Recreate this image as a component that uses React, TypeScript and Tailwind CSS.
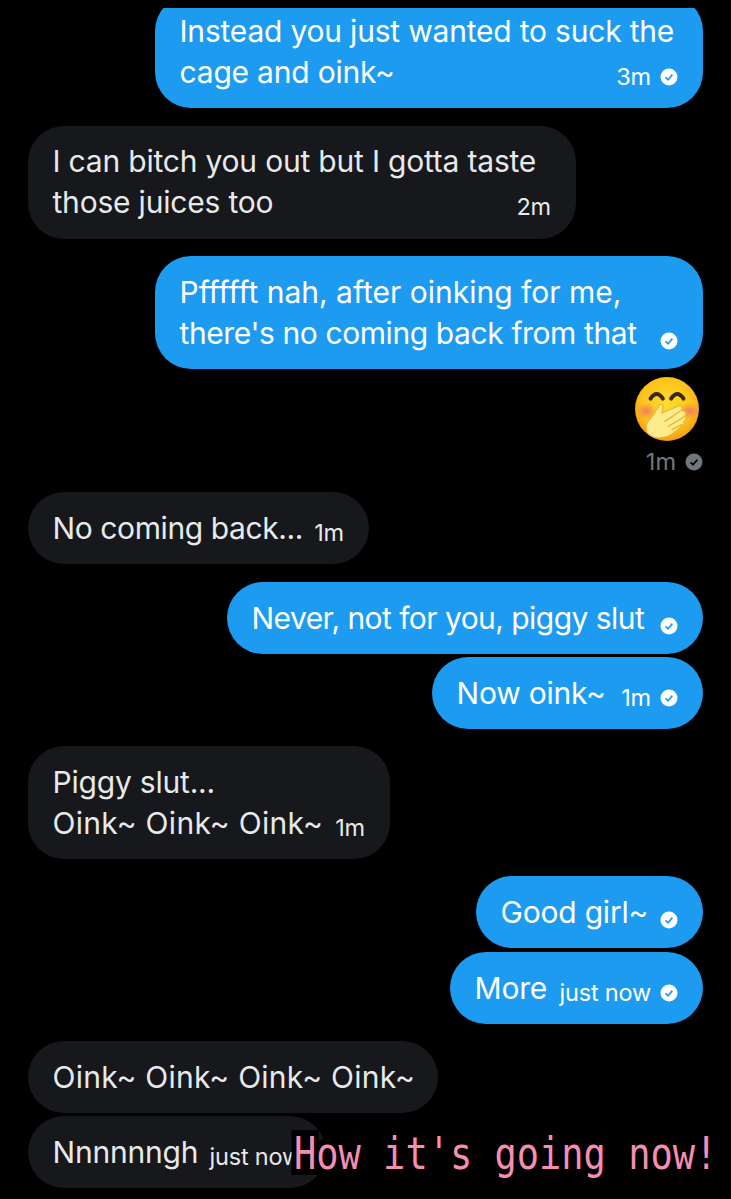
import type { ReactNode } from "react";

type MetaProps = { time?: string; read?: boolean };

function ReadCheck({ gray }: { gray?: boolean }) {
  return (
    <svg viewBox="0 0 18 18" className="h-[18px] w-[18px] shrink-0">
      <circle cx="9" cy="9" r="8.5" fill={gray ? "#71767b" : "#ffffff"} />
      <path
        d="M5.6 9.4 L8 11.7 L12.4 6.6"
        fill="none"
        stroke={gray ? "#000000" : "#1d9bf0"}
        strokeWidth="1.7"
      />
    </svg>
  );
}

function Meta({ time, read }: MetaProps) {
  return (
    <span
      className={`flex shrink-0 items-center gap-[9px] text-[23.5px] leading-[28px] ${
        time ? "pt-[9px]" : "pt-[15px]"
      }`}
    >
      {time ? <span>{time}</span> : null}
      {read ? <ReadCheck /> : null}
    </span>
  );
}

function Bubble({
  lines,
  mine,
  width,
  time,
}: {
  lines: ReactNode[];
  mine?: boolean;
  width: string;
  time?: string;
}) {
  const head = lines.slice(0, -1);
  const last = lines[lines.length - 1];
  return (
    <div
      className={`${width} rounded-[36px] py-[15.5px] pr-[25px] pl-[24.5px] text-[30px] leading-[41px] tracking-[-0.2px] whitespace-nowrap ${
        mine
          ? "self-end bg-[#1d9bf0] text-white"
          : "self-start bg-[#16181c] text-[#e7e9ea]"
      }`}
    >
      {head.map((l, i) => (
        <div key={i}>{l}</div>
      ))}
      <div className="flex items-center justify-between">
        <span>{last}</span>
        <Meta time={time} read={mine} />
      </div>
    </div>
  );
}

function HandEmoji() {
  return (
    <svg viewBox="0 0 64 64" className="mr-[3px] h-[66px] w-[66px]">
      <defs>
        <radialGradient id="face" cx="50%" cy="42%" r="58%">
          <stop offset="0%" stopColor="#fedc2e" />
          <stop offset="70%" stopColor="#fcc21b" />
          <stop offset="100%" stopColor="#f19a14" />
        </radialGradient>
        <radialGradient id="blush" cx="50%" cy="50%" r="50%">
          <stop offset="0%" stopColor="#f0706a" stopOpacity="0.85" />
          <stop offset="100%" stopColor="#f0706a" stopOpacity="0" />
        </radialGradient>
      </defs>
      <circle cx="32" cy="32" r="31" fill="url(#face)" />
      <ellipse cx="12" cy="34" rx="10" ry="8" fill="url(#blush)" />
      <ellipse cx="54" cy="34" rx="10" ry="8" fill="url(#blush)" />
      <path d="M16 22 Q22 13 28 22" fill="none" stroke="#3d2a12" strokeWidth="3.8" strokeLinecap="round" />
      <path d="M36 22 Q42 13 48 22" fill="none" stroke="#3d2a12" strokeWidth="3.8" strokeLinecap="round" />
      <g transform="translate(0 2)">
        <path
          d="M12 46 C13 40 18 38 20 34 L24 27 C26 24 29 26 28 29 L27 34 L43 27 C46 26 48 29 46 31 L48 32 C51 32 51 36 49 37 C51 38 51 41 48 42 C49 44 48 46 46 46 C42 51 36 57 26 58 C18 59 10 54 12 46 Z"
          fill="#fdec8e"
          stroke="#eeb02a"
          strokeWidth="1"
        />
        <path d="M30 42 L45 32 M33 47 L48 38 M37 50 L46 45" fill="none" stroke="#eeb02a" strokeWidth="1.2" strokeLinecap="round" />
      </g>
    </svg>
  );
}

export default function App() {
  return (
    <div className="relative h-[1199px] w-[731px] overflow-hidden bg-black font-['Inter','Noto_Sans',sans-serif]">
      {/* top edge of the scroll area covers the first bubble */}
      <div className="absolute top-0 left-0 z-10 h-2 w-full bg-black" />

      <div className="-mt-[5px] flex flex-col px-[28px]">
        <Bubble mine width="w-[548px]" lines={["Instead you just wanted to suck the", "cage and oink~"]} time="3m" />
        <div className="h-[17.5px]" />
        <Bubble width="w-[548px]" lines={["I can bitch you out but I gotta taste", "those juices too"]} time="2m" />
        <div className="h-[17.5px]" />
        <Bubble
          mine
          width="w-[548px]"
          lines={[
            <span className="tracking-[0px]">Pffffft nah, after oinking for me,</span>,
            <span className="tracking-[-0.4px]">there's no coming back from that</span>,
          ]}
        />

        <div className="mt-[7px] flex flex-col items-end">
          <HandEmoji />
          <div className="mt-[6px] flex items-center gap-[9px] text-[23.5px] leading-[28px] text-[#71767b]">
            <span>1m</span>
            <ReadCheck gray />
          </div>
        </div>

        <div className="h-[16px]" />
        <Bubble width="w-[341px]" lines={[<span className="tracking-[-0.4px]">No coming back...</span>]} time="1m" />
        <div className="h-[18px]" />
        <Bubble mine width="w-[476px]" lines={[<span className="tracking-[-0.55px]">Never, not for you, piggy slut</span>]} />
        <div className="h-[3px]" />
        <Bubble mine width="w-[271px]" lines={["Now oink~"]} time="1m" />
        <div className="h-[17px]" />
        <Bubble
          width="w-[362px]"
          lines={["Piggy slut...", <span className="tracking-[0.3px]">Oink~ Oink~ Oink~</span>]}
          time="1m"
        />
        <div className="h-[17px]" />
        <Bubble mine width="w-[227px]" lines={["Good girl~"]} />
        <div className="h-[4px]" />
        <Bubble mine width="w-[253px]" lines={["More"]} time="just now" />
        <div className="h-[17px]" />
        <Bubble width="w-[410px]" lines={[<span className="tracking-[0.25px]">Oink~ Oink~ Oink~ Oink~</span>]} />
        <div className="h-[3px]" />
        <Bubble width="w-[298px]" lines={["Nnnnnngh"]} time="just now" />
      </div>

      {/* sticker text laid over the chat */}
      <div className="absolute top-[1131px] left-[294px] z-20 scale-y-[1.2] font-['DejaVu_Sans_Mono',monospace] text-[37px] leading-[48px] whitespace-nowrap text-[#f48fb1] [-webkit-text-stroke:10px_#000] [paint-order:stroke_fill]">
        How it's going now!
      </div>
    </div>
  );
}
